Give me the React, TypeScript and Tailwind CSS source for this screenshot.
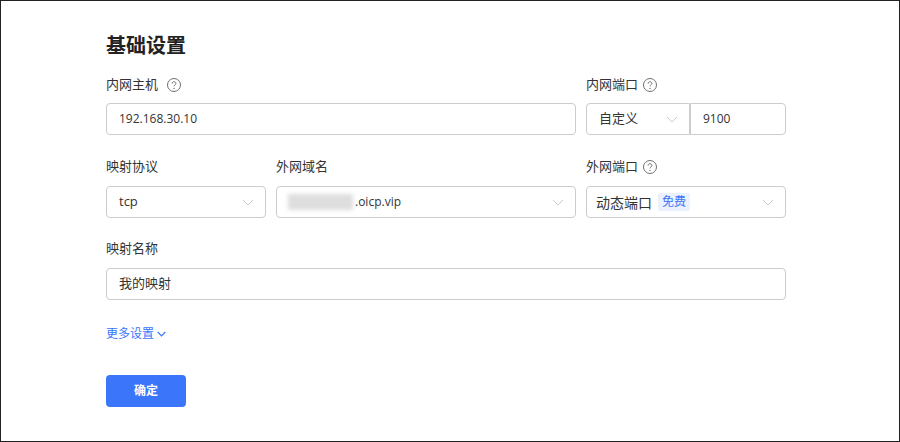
import React from 'react';

const font = 'font-["Open_Sans","Noto_Sans_CJK_SC",sans-serif]';

function Chevron({ className = 'text-[#c8ccd2]' }: { className?: string }) {
  return (
    <svg width="12" height="7" viewBox="0 0 12 7" fill="none" className={className}>
      <path d="M1 1l5 5 5-5" stroke="currentColor" strokeWidth="1" />
    </svg>
  );
}

function Help() {
  return (
    <svg width="14" height="14" viewBox="0 0 14 14" fill="none" className="text-[#707070]">
      <circle cx="7" cy="7" r="6.5" stroke="currentColor" />
      <path d="M5.1 5.6c0-1.1.8-1.9 1.9-1.9s1.9.8 1.9 1.8c0 1.4-1.9 1.4-1.9 2.9" stroke="currentColor" />
      <circle cx="7" cy="10.4" r=".7" fill="currentColor" />
    </svg>
  );
}

function Label({ text, help, gap = 'gap-[5px]' }: { text: string; help?: boolean; gap?: string }) {
  return (
    <div className={`flex h-[20px] items-center ${gap} text-[13px] text-[#333]`}>
      <span>{text}</span>
      {help && <Help />}
    </div>
  );
}

const box = 'flex h-[32px] items-center border border-[#ccc] bg-white text-[13px] text-[#333]';

export default function App() {
  return (
    <div className={`${font} box-border h-[442px] w-[900px] border border-[#222] bg-white pl-[105px] pt-[31px]`}>
      <h1 className="h-[28px] text-[20px] leading-[28px] font-bold text-[#222]">基础设置</h1>

      <div className="mt-[15px] flex w-[680px] gap-[10px]">
        <div className="w-[470px]">
          <Label text="内网主机" help gap="gap-[9px]" />
          <div className={`${box} mt-[8px] rounded-[4px] px-[12px]`}>
            <span className="text-[12px]">192.168.30.10</span>
          </div>
        </div>
        <div className="w-[200px]">
          <Label text="内网端口" help />
          <div className="mt-[8px] flex">
            <div className={`${box} w-[104px] justify-between rounded-l-[4px] pl-[12px] pr-[11px]`}>
              <span>自定义</span>
              <Chevron />
            </div>
            <div className={`${box} w-[96px] rounded-r-[4px] px-[12px]`}>
              <span className="text-[12px]">9100</span>
            </div>
          </div>
        </div>
      </div>

      <div className="mt-[22px] flex w-[680px] gap-[10px]">
        <div className="w-[160px]">
          <Label text="映射协议" />
          <div className={`${box} mt-[9px] justify-between rounded-[4px] pl-[12px] pr-[11px]`}>
            <span>tcp</span>
            <Chevron />
          </div>
        </div>
        <div className="w-[300px]">
          <Label text="外网域名" />
          <div className={`${box} mt-[9px] justify-between rounded-[4px] pl-[11px] pr-[11px]`}>
            <span className="flex items-center">
              <span className="h-[16px] w-[65px] bg-[#dedede] blur-[2px]" />
              <span className="ml-[2px] text-[12px]">.oicp.vip</span>
            </span>
            <Chevron />
          </div>
        </div>
        <div className="w-[200px]">
          <Label text="外网端口" help />
          <div className={`${box} mt-[9px] justify-between rounded-[4px] pl-[9px] pr-[11px]`}>
            <span className="flex items-center gap-[6px]">
              <span className="text-[14px]">动态端口</span>
              <span className="rounded-[2px] bg-[#ebf1ff] px-[4px] text-[12px] leading-[18px] text-[#3a75fa]">免费</span>
            </span>
            <Chevron />
          </div>
        </div>
      </div>

      <div className="mt-[21px] w-[680px]">
        <Label text="映射名称" />
        <div className={`${box} mt-[9px] rounded-[4px] px-[12px]`}>我的映射</div>
      </div>

      <div className="mt-[24px] flex h-[20px] items-center gap-[3px] text-[12px] text-[#3a75fa]">
        <span>更多设置</span>
        <svg width="9" height="6" viewBox="0 0 9 6" fill="none" className="text-[#3a75fa]">
          <path d="M.7 1l3.8 3.8L8.3 1" stroke="currentColor" strokeWidth="1.2" />
        </svg>
      </div>

      <button className="mt-[31px] block h-[32px] w-[80px] rounded-[4px] bg-[#3a75fa] text-[12px] font-bold text-white">确定</button>
    </div>
  );
}
